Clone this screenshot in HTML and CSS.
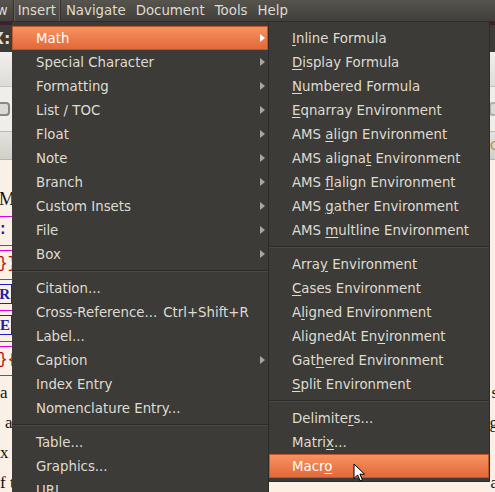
FILE: index.html
```html
<!DOCTYPE html>
<html>
<head>
<meta charset="utf-8">
<link rel="stylesheet" href="styles.css">
</head>
<body>
<div class="screen">
  <div class="menubar">
    <span class="mb-item mb-view">View</span>
    <span class="mb-item mb-active">Insert</span>
    <span class="mb-item">Navigate</span>
    <span class="mb-item">Document</span>
    <span class="mb-item">Tools</span>
    <span class="mb-item">Help</span>
  </div>
  <div class="strip"></div>
  <div class="titlebar"><span class="title">LyX:</span></div>
  <div class="toolbar tb1"></div>
  <div class="toolbar tb2">
    <span class="tool-icon"></span>
    <span class="tool-icon right"></span>
  </div>
  <div class="tabrow"><span class="tab-c">C</span></div>
  <div class="doc">
    <div class="d-heading">Math</div>
    <div class="rule"></div>
    <div class="d-code blue">: :</div>
    <div class="rule double"></div>
    <div class="d-code red">}}:</div>
    <div class="rule"></div>
    <div class="d-box">R</div>
    <div class="rule"></div>
    <div class="d-box">E</div>
    <div class="rule double"></div>
    <div class="d-code red">}{</div>
    <div class="rule"></div>
    <div class="d-text"><span>a</span><span class="r">s</span></div>
    <div class="d-text"><span class="in">a</span><span class="r">g</span></div>
    <div class="d-text"><span>x c</span><span class="r"></span></div>
    <div class="d-text"><span>f t</span><span class="r">a</span></div>
  </div>
</div>

<div class="menu main-menu">
  <div class="item hl"><span>Math</span><span class="arrow"></span></div>
  <div class="item"><span>Special Character</span><span class="arrow"></span></div>
  <div class="item"><span>Formatting</span><span class="arrow"></span></div>
  <div class="item"><span>List / TOC</span><span class="arrow"></span></div>
  <div class="item"><span>Float</span><span class="arrow"></span></div>
  <div class="item"><span>Note</span><span class="arrow"></span></div>
  <div class="item"><span>Branch</span><span class="arrow"></span></div>
  <div class="item"><span>Custom Insets</span><span class="arrow"></span></div>
  <div class="item"><span>File</span><span class="arrow"></span></div>
  <div class="item"><span>Box</span><span class="arrow"></span></div>
  <div class="sep"></div>
  <div class="item"><span>Citation...</span></div>
  <div class="item"><span>Cross-Reference...</span><span class="shortcut">Ctrl+Shift+R</span></div>
  <div class="item"><span>Label...</span></div>
  <div class="item"><span>Caption</span><span class="arrow"></span></div>
  <div class="item"><span>Index Entry</span></div>
  <div class="item"><span>Nomenclature Entry...</span></div>
  <div class="sep"></div>
  <div class="item"><span>Table...</span></div>
  <div class="item"><span>Graphics...</span></div>
  <div class="item"><span>URL</span></div>
</div>

<div class="menu sub-menu">
  <div class="item"><span><u>I</u>nline Formula</span></div>
  <div class="item"><span><u>D</u>isplay Formula</span></div>
  <div class="item"><span><u>N</u>umbered Formula</span></div>
  <div class="item"><span><u>E</u>qnarray Environment</span></div>
  <div class="item"><span>AMS <u>a</u>lign Environment</span></div>
  <div class="item"><span>AMS aligna<u>t</u> Environment</span></div>
  <div class="item"><span>AMS <u>f</u>lalign Environment</span></div>
  <div class="item"><span>AMS <u>g</u>ather Environment</span></div>
  <div class="item"><span>AMS <u>m</u>ultline Environment</span></div>
  <div class="sep"></div>
  <div class="item"><span>Arra<u>y</u> Environment</span></div>
  <div class="item"><span><u>C</u>ases Environment</span></div>
  <div class="item"><span>A<u>l</u>igned Environment</span></div>
  <div class="item"><span>AlignedAt En<u>v</u>ironment</span></div>
  <div class="item"><span>Gat<u>h</u>ered Environment</span></div>
  <div class="item"><span><u>S</u>plit Environment</span></div>
  <div class="sep"></div>
  <div class="item"><span>Delimite<u>r</u>s...</span></div>
  <div class="item"><span>Matri<u>x</u>...</span></div>
  <div class="item hl"><span>Macr<u>o</u></span></div>
</div>

<svg class="cursor" width="13" height="20" viewBox="0 0 13 20">
  <path d="M1 1 L1 15.5 L4.6 12 L7.2 17.8 L9.4 16.8 L6.9 11.2 L11.6 11.2 Z" fill="#ffffff" stroke="#000000" stroke-width="1" stroke-linejoin="round"/>
</svg>
</body>
</html>
```

FILE: styles.css
```css
* { box-sizing: border-box; }
html, body { margin: 0; padding: 0; }
body {
  width: 495px;
  height: 492px;
  overflow: hidden;
  position: relative;
  background: #faf0e6;
  font-family: "DejaVu Sans", sans-serif;
  font-size: 13.33px;
}
.screen {
  width: 495px;
  height: 492px;
  display: flex;
  flex-direction: column;
  overflow: hidden;
}

/* menubar */
.menubar {
  height: 22px;
  flex: none;
  display: flex;
  align-items: stretch;
  background: linear-gradient(#57544d, #403f3a);
  border-bottom: 1px solid #2e2d29;
  color: #dfdbd2;
}
.mb-item {
  padding: 0 5px;
  display: flex;
  align-items: center;
  white-space: nowrap;
}
.mb-view { margin-left: -29px; }
.mb-active {
  padding: 0 4px;
  border-left: 1px solid #33322e;
  border-right: 1px solid #33322e;
  background: linear-gradient(#5c5952, #46443f);
  box-shadow: inset 1px 0 0 #66635b, inset -1px 0 0 #66635b;
}

/* window chrome behind the menus */
.strip { height: 3px; flex: none; background: #3b1f2c; }
.titlebar {
  height: 27px;
  flex: none;
  background: #3c3b37;
  color: #e2ded5;
  font-weight: bold;
  font-size: 16px;
  display: flex;
  align-items: center;
}
.title { margin-left: -28px; }
.toolbar { flex: none; }
.tb1 {
  height: 35px;
  background: linear-gradient(#f1f0ee, #dedcd7);
  border-bottom: 1px solid #c6c3bc;
}
.tb2 {
  height: 45px;
  background: #efeeeb;
  border-bottom: 1px solid #bcb8b0;
  display: flex;
  align-items: center;
  justify-content: space-between;
}
.tool-icon {
  width: 14px;
  height: 14px;
  margin-left: -4px;
  border: 2px solid #8a8882;
  border-radius: 4px;
  background: #dcdad6;
}
.tool-icon.right { margin-left: 0; margin-right: -8px; border-color: #b2b0ab; }
.tabrow {
  height: 28px;
  flex: none;
  background: linear-gradient(#e4e2dd, #d2cfc8);
  border-bottom: 1px solid #b9b5ad;
  display: flex;
  justify-content: flex-end;
  align-items: center;
}
.tab-c {
  color: #c98a2a;
  font-size: 13px;
  margin-right: -4px;
}
.doc {
  flex: 1;
  background: #faf0e6;
  padding-top: 28px;
  font-family: "Liberation Serif", serif;
  color: #111;
}
.d-heading { height: 22px; font-size: 18px; line-height: 22px; margin-left: -1px; }
.rule { height: 1px; width: 220px; background: #e000e0; margin: 6px 0 4px; }
.rule.double { height: 6px; background: none; border-top: 1px solid #e000e0; border-bottom: 1px solid #e000e0; }
.d-code {
  font-family: "Liberation Mono", monospace;
  font-size: 16px;
  height: 18px;
  line-height: 18px;
  margin-left: -2px;
}
.blue { color: #1a1a9c; font-weight: bold; }
.red { color: #b01010; }
.d-box {
  width: 22px;
  height: 20px;
  margin-left: -10px;
  border: 1px solid #1a1ad0;
  color: #2222a0;
  font-family: "Liberation Serif", serif;
  font-size: 15px;
  line-height: 18px;
  text-align: right;
  padding-right: 1px;
  font-weight: bold;
}
.d-text {
  display: flex;
  justify-content: space-between;
  font-family: "Liberation Serif", serif;
  font-size: 17px;
  height: 26px;
  line-height: 26px;
  margin-top: 4px;
}
.d-text .in { padding-left: 5px; }
.d-text .r { margin-right: -3px; }

/* menus */
.menu {
  position: absolute;
  top: 22px;
  background: #3c3b37;
  color: #dfdbd2;
  padding: 4px 0 3px;
}
.main-menu {
  left: 12px;
  width: 257px;
  height: 480px;
  border-right: 1px solid #2c2b28;
}
.sub-menu {
  left: 268px;
  width: 222px;
  border: 1px solid #2c2b28;
  border-top: none;
}
.item {
  height: 24px;
  display: flex;
  align-items: center;
  padding: 0 3px 0 24px;
  white-space: nowrap;
}
.sub-menu .item { padding-left: 23px; }
.item u { text-decoration-thickness: 1px; text-underline-offset: 2px; }
.item.hl {
  background: linear-gradient(#f6935f, #e3683a);
  color: #ffffff;
  border: 1px solid #c0562a;
  padding-left: 23px;
  padding-right: 2px;
}
.sub-menu .item.hl { padding-left: 22px; }
.arrow {
  margin-left: auto;
  width: 0;
  height: 0;
  border-left: 5px solid #aaa69e;
  border-top: 4px solid transparent;
  border-bottom: 4px solid transparent;
}
.hl .arrow { border-left-color: #ffffff; }
.shortcut { margin-left: 6px; }
.sep {
  height: 1px;
  margin: 4px 0 5px;
  background: #2b2a27;
  box-shadow: 0 1px 0 #4b4a44;
}

.cursor {
  position: absolute;
  left: 353px;
  top: 463px;
}
```
